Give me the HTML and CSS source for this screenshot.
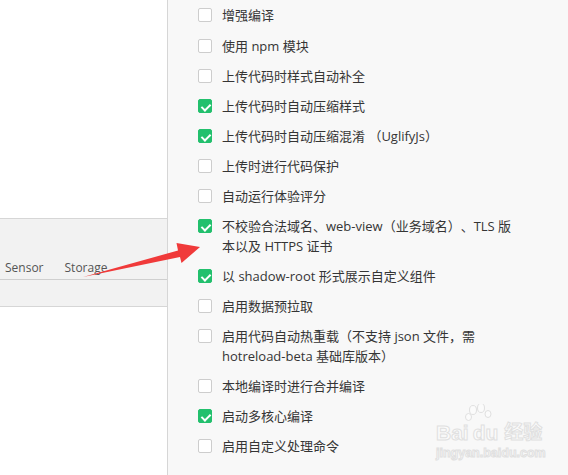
FILE: index.html
```html
<!DOCTYPE html>
<html lang="zh-CN">
<head>
  <meta charset="UTF-8" />
  <title>详情 - 本地设置</title>
  <link rel="stylesheet" href="styles.css">
</head>
<body>

  <div class="devtools">
    <div class="preview"></div>
    <div class="tool-bar">
      <span class="tab">Sensor</span>
      <span class="tab">Storage</span>
    </div>
    <div class="sub-bar"></div>
    <div class="console"></div>
  </div>

  <div class="settings">
    <label class="row"><span class="box"></span><span class="text">增强编译</span></label>
    <label class="row"><span class="box"></span><span class="text">使用 npm 模块</span></label>
    <label class="row"><span class="box"></span><span class="text">上传代码时样式自动补全</span></label>
    <label class="row"><span class="box on"></span><span class="text">上传代码时自动压缩样式</span></label>
    <label class="row"><span class="box on"></span><span class="text">上传代码时自动压缩混淆 （UglifyJs）</span></label>
    <label class="row"><span class="box"></span><span class="text">上传时进行代码保护</span></label>
    <label class="row"><span class="box"></span><span class="text">自动运行体验评分</span></label>
    <label class="row"><span class="box on"></span><span class="text">不校验合法域名、web-view（业务域名）、TLS 版<br>本以及 HTTPS 证书</span></label>
    <label class="row"><span class="box on"></span><span class="text">以 shadow-root 形式展示自定义组件</span></label>
    <label class="row"><span class="box"></span><span class="text">启用数据预拉取</span></label>
    <label class="row"><span class="box"></span><span class="text">启用代码自动热重载（不支持 json 文件，需<br>hotreload-beta 基础库版本）</span></label>
    <label class="row"><span class="box"></span><span class="text">本地编译时进行合并编译</span></label>
    <label class="row"><span class="box on"></span><span class="text">启动多核心编译</span></label>
    <label class="row"><span class="box"></span><span class="text">启用自定义处理命令</span></label>
  </div>

  <!-- annotation arrow drawn over the screenshot -->
  <svg class="arrow" width="568" height="475" viewBox="0 0 568 475">
    <polygon points="83,277 178,250.5 176.5,243 200,247 181.5,263 180,257" fill="#f03a3a"/>
  </svg>

  <div class="watermark">
    <div class="wm-logo">
      <span>Bai</span>
      <svg class="paw" width="30" height="26" viewBox="0 0 30 26">
        <g fill="#fbfbfb" stroke="#e0e0e0" stroke-width="1">
          <ellipse cx="8" cy="6" rx="3.5" ry="4.5"/>
          <ellipse cx="16" cy="4" rx="3.5" ry="4.5"/>
          <ellipse cx="3.5" cy="13" rx="3" ry="3.5"/>
          <ellipse cx="23" cy="10" rx="3" ry="3.5"/>
        </g>
      </svg>
      <span>du</span>
      <span class="wm-cn">经验</span>
    </div>
    <div class="wm-url">jingyan.baidu.com</div>
  </div>

</body>
</html>
```

FILE: styles.css
```css
* {
  box-sizing: border-box;
}

body {
  margin: 0;
  width: 568px;
  height: 475px;
  overflow: hidden;
  display: flex;
  font-family: 'Open Sans', 'Noto Sans CJK SC', sans-serif;
  background-color: #fff;
}

.devtools {
  width: 167px;
  display: flex;
  flex-direction: column;
}

.preview {
  height: 219px;
  background-color: #fff;
  border-bottom: 1px solid #d6d6d6;
}

.tool-bar {
  height: 61px;
  background-color: #f2f2f2;
  border-bottom: 1px solid #cfcfcf;
  display: flex;
  align-items: flex-end;
  padding: 0 0 3px 5px;
  gap: 21px;
}

.tab {
  font-size: 12px;
  color: #555;
  line-height: 16px;
}

.sub-bar {
  height: 27px;
  background-color: #f2f2f2;
  border-bottom: 1px solid #d6d6d6;
}

.console {
  flex: 1;
  background-color: #fff;
}

.settings {
  flex: 1;
  background-color: #f8f8f8;
  border-left: 1px solid #d6d6d6;
  padding: 0 0 0 30px;
}

.row {
  display: flex;
  align-items: flex-start;
  padding: 5px 0;
  font-size: 13px;
  line-height: 20px;
  color: #353535;
  text-spacing-trim: space-all;
}

.row:first-child {
  padding-bottom: 6px;
}

.box {
  flex: none;
  width: 14px;
  height: 14px;
  margin: 3px 10px 0 0;
  border: 1px solid #cdcdcd;
  border-radius: 2px;
  background-color: #fff;
  position: relative;
}

.box.on {
  background-color: #22c06d;
  border-color: #22c06d;
}

.box.on::after {
  content: '';
  position: absolute;
  left: 3.5px;
  top: 1.5px;
  width: 4px;
  height: 7px;
  border-right: 2px solid #fff;
  border-bottom: 2px solid #fff;
  transform: rotate(45deg);
}

.text {
  white-space: nowrap;
}

.arrow {
  position: absolute;
  left: 0;
  top: 0;
  pointer-events: none;
}

.watermark {
  position: absolute;
  left: 436px;
  top: 412px;
  color: #fbfbfb;
  -webkit-text-stroke: 1px #e0e0e0;
  pointer-events: none;
}

.wm-logo {
  display: flex;
  align-items: flex-end;
  font-family: 'Liberation Sans', 'Noto Sans CJK SC', sans-serif;
  font-weight: bold;
  font-size: 21px;
  line-height: 22px;
  height: 32px;
}

.paw {
  margin: 0 -22px 14px -4px;
}

.wm-cn {
  margin-left: 6px;
  font-size: 19px;
}

.wm-url {
  font-family: 'Liberation Sans', sans-serif;
  font-weight: bold;
  font-size: 12.5px;
  line-height: 14px;
  margin-top: 2px;
}
```
